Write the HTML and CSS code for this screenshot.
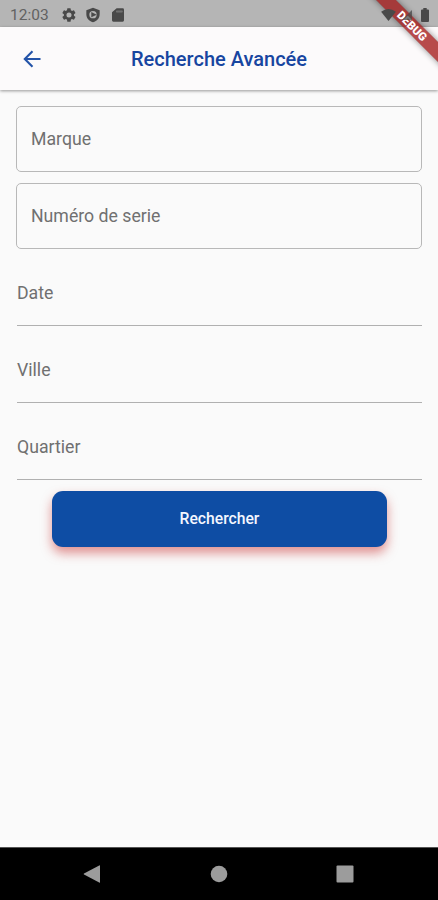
FILE: index.html
```html
<!DOCTYPE html>
<html lang="fr">
<head>
<meta charset="utf-8">
<title>Recherche Avancée</title>
<link rel="stylesheet" href="styles.css">
</head>
<body>
<div class="screen">
  <div class="status">
    <span class="clock">12:03</span>
    <svg class="gear" viewBox="0 0 24 24"><path fill-rule="evenodd" d="M19.4 13a7.8 7.8 0 0 0 0-2l2.1-1.7a.5.5 0 0 0 .1-.6l-2-3.5a.5.5 0 0 0-.6-.2l-2.5 1a7.300 7.300 0 0 0-1.700-1l-.4-2.600a.5.5 0 0 0-.5-.4h-4a.5.5 0 0 0-.5.4L9 5a7.700 7.700 0 0 0-1.700 1L4.800 5a.5.5 0 0 0-.6.2l-2 3.500a.5.5 0 0 0 .1.6L4.400 11a8 8 0 0 0 0 2l-2.100 1.700a.5.5 0 0 0-.1.600l2 3.500c.1.200.400.300.600.200l2.500-1a7.300 7.300 0 0 0 1.700 1l.4 2.600c0 .2.200.4.500.4h4c.3 0 .5-.2.500-.4l.4-2.600a7.700 7.700 0 0 0 1.700-1l2.500 1c.2.100.500 0 .600-.2l2-3.500a.5.500 0 0 0-.1-.600zM12 8.200a3.800 3.800 0 1 1 0 7.600 3.800 3.800 0 0 1 0-7.600z"/></svg>
    <svg class="shield" viewBox="0 0 24 24"><path fill-rule="evenodd" d="M12 1 2 4.800V11c0 5.500 4 10.500 10 12 6-1.500 10-6.500 10-12V4.800zM12 6a5.500 5.500 0 1 0 0 11 5.500 5.500 0 0 0 0-11z"/><path d="m9.500 7.500 8 4-8 4z"/></svg>
    <svg class="card" viewBox="0 0 24 24"><path fill-rule="evenodd" d="M10 2h9a2 2 0 0 1 2 2v16a2 2 0 0 1-2 2H5a2 2 0 0 1-2-2V8zM9.500 5.500v2.500h9V5.500z" /><path opacity=".65" d="M9.500 5.500v2.500h9V5.500z"/></svg>
    <span class="spacer"></span>
    <svg class="wifi" viewBox="0 0 16 13"><path d="M0 3Q8-3 16 3L8 13z"/></svg>
    <svg class="signal" viewBox="0 0 12 12"><path d="M12 0v12H0z"/></svg>
    <svg class="battery" viewBox="0 0 8 14"><path d="M2.300 0h3.400v1.500H7a1 1 0 0 1 1 1V13a1 1 0 0 1-1 1H1a1 1 0 0 1-1-1V2.500a1 1 0 0 1 1-1h1.300z"/></svg>
  </div>
  <header class="appbar">
    <svg class="back" viewBox="0 0 18 18"><path d="M17.500 9H2M9.500 1.300 1.800 9l7.700 7.700"/></svg>
    <h1 class="title">Recherche Avancée</h1>
  </header>
  <main class="form">
    <div class="field boxed">Marque</div>
    <div class="field boxed">Numéro de serie</div>
    <div class="field lined">Date</div>
    <div class="field lined">Ville</div>
    <div class="field lined">Quartier</div>
    <button class="submit">Rechercher</button>
  </main>
  <nav class="nav">
    <svg viewBox="0 0 18 18"><path d="M17 .8v16.400q0 .8-.8.400L1 9.500q-.8-.5 0-1L16.200.4q.8-.4.800.4z"/></svg>
    <svg viewBox="0 0 18 18"><circle cx="9" cy="9" r="8.300"/></svg>
    <svg viewBox="0 0 18 18"><rect x=".5" y=".5" width="17" height="17" rx="1"/></svg>
  </nav>
  <div class="debug">DEBUG</div>
</div>
</body>
</html>
```
FILE: styles.css
```css
* { box-sizing: border-box; }
body { margin: 0; font-family: Roboto, sans-serif; }
.screen {
  position: relative;
  display: flex;
  flex-direction: column;
  width: 438px;
  height: 900px;
  overflow: hidden;
  background: #fafafa;
}
.status {
  display: flex;
  align-items: center;
  height: 27px;
  padding: 2px 9px 0 10px;
  background: #b5b5b5;
  color: #626262;
  fill: #494949;
}
.status svg { position: relative; z-index: 2; }
.clock { width: 51px; font-size: 15.5px; line-height: 24px; }
.gear { width: 16px; height: 16px; }
.shield { width: 16px; height: 16px; margin-left: 8px; }
.card { width: 16px; height: 16px; margin-left: 9px; }
.spacer { flex: 1; }
.wifi { width: 15px; height: 12px; margin-right: 6px; }
.signal { width: 10px; height: 12px; margin-right: 9px; opacity: .75; }
.battery { width: 8px; height: 14px; }
.appbar {
  display: grid;
  grid-template-columns: 18px 1fr 18px;
  align-items: center;
  height: 63px;
  padding: 0 23px;
  background: #fcfafb;
  box-shadow: 0 1px 3px rgba(0, 0, 0, .4);
}
.back { width: 18px; height: 18px; fill: none; stroke: #2353a8; stroke-width: 2.1; }
.title {
  margin: 0;
  text-align: center;
  font-size: 20px;
  line-height: 24px;
  font-weight: 500;
  color: #1745a0;
}
.form {
  flex: 1;
  display: flex;
  flex-direction: column;
  padding: 16px 16px 0;
}
.field { height: 66px; margin-bottom: 11px; font-size: 17.7px; line-height: 65px; color: #707070; }
.boxed { padding-left: 14px; border: 1px solid #b8b8b8; border-radius: 5px; }
.lined { margin-left: 1px; border-bottom: 1px solid #b0b0b0; line-height: 67px; }
.submit {
  width: 335px;
  height: 56px;
  margin: 0 0 0 36px;
  padding: 0;
  border: 0;
  border-radius: 11px;
  background: #0e4da4;
  box-shadow: 0 6px 11px rgba(198, 40, 40, .5);
  color: #f4f7ff;
  font: 500 15.7px/56px Roboto, sans-serif;
}
.nav {
  display: flex;
  justify-content: space-between;
  align-items: center;
  height: 53px;
  padding: 0 84px 0 83px;
  border-top: 1px solid #555;
  background: #000;
  fill: #9c9c9c;
}
.nav svg { width: 18px; height: 18px; }
.debug {
  position: absolute;
  left: 352px;
  top: 19px;
  z-index: 1;
  width: 120px;
  height: 14px;
  transform: rotate(45deg);
  background: rgba(160, 20, 20, .76);
  box-shadow: 0 0 6px rgba(0, 0, 0, .45);
  color: #fff;
  text-align: center;
  font-size: 11.5px;
  line-height: 14px;
  font-weight: 900;
}
```
